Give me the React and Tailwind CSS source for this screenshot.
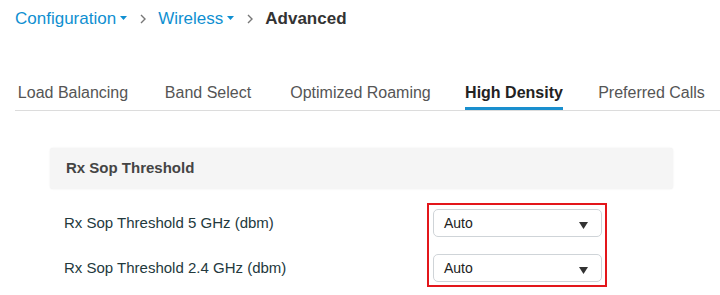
import React from 'react';

const tabs = [
  { label: 'Load Balancing', ml: 'ml-[3px]', w: 'w-[110px]' },
  { label: 'Band Select', ml: 'ml-[37px]', w: 'w-[86px]' },
  { label: 'Optimized Roaming', ml: 'ml-[35px]', w: 'w-[149px]' },
  { label: 'High Density', ml: 'ml-[30px]', w: 'w-[98px]', active: true },
  { label: 'Preferred Calls', ml: 'ml-[35px]', w: 'w-[107px]' },
];

const Caret = () => (
  <svg width="7" height="4" viewBox="0 0 7 4" className="ml-[4px] mb-[3px]">
    <path d="M0 0 L7 0 L3.5 4 Z" fill="#0f8fd1" />
  </svg>
);

const Chevron = () => (
  <svg width="6" height="10" viewBox="0 0 6 10" className="ml-[13px] mr-[12px]">
    <path d="M1 1 L5 5 L1 9" fill="none" stroke="#777" strokeWidth="1.4" />
  </svg>
);

const SelectBox = ({ value }) => (
  <div className="flex h-[28px] w-[169px] items-center justify-between rounded-[5px] border border-[#cfd4d8] bg-white pl-[10px] pr-[13px]">
    <span className="text-[14px] text-[#222]">{value}</span>
    <svg width="9" height="7" viewBox="0 0 9 7" className="mt-[4px]">
      <path d="M0 0 L9 0 L4.5 7 Z" fill="#333" />
    </svg>
  </div>
);

const App = () => {
  return (
    <div className="h-[295px] w-[720px] overflow-hidden bg-white font-['Liberation_Sans',Arial,sans-serif]">
      {/* breadcrumb */}
      <div className="flex h-[20px] items-center pl-[15px] pt-0 mt-[9px] text-[17px] leading-[20px]">
        <span className="text-[#0f8fd1]">Configuration</span>
        <Caret />
        <Chevron />
        <span className="text-[#0f8fd1]">Wireless</span>
        <Caret />
        <Chevron />
        <span className="font-bold text-[#333]">Advanced</span>
      </div>

      {/* tabs */}
      <div className="ml-[15px] mt-[54px] flex border-b border-[#dcdcdc]">
        {tabs.map((t) => (
          <div
            key={t.label}
            className={`${t.ml} ${t.w} flex justify-center whitespace-nowrap border-b-[3px] pb-[4px] text-[16px] leading-[20px] ${
              t.active ? 'border-[#1a8fce] font-bold text-[15px] text-[#222]' : 'border-transparent text-[#555]'
            }`}
          >
            {t.label}
          </div>
        ))}
      </div>

      {/* panel */}
      <div className="ml-[50px] mt-[37px] flex h-[41px] w-[623px] items-center rounded-[3px] bg-[#f5f5f5] pl-[16px] shadow-[0_0_2px_rgba(0,0,0,0.08)]">
        <span className="text-[15px] font-bold text-[#444]">Rx Sop Threshold</span>
      </div>

      {/* rows */}
      <div className="mt-[14px] flex">
        <div className="ml-[64px] mt-[6px] flex w-[363px] flex-col gap-[17px]">
          <div className="flex h-[28px] items-center text-[15px] text-[#23393d]">Rx Sop Threshold 5 GHz (dbm)</div>
          <div className="flex h-[28px] items-center text-[15px] text-[#23393d]">Rx Sop Threshold 2.4 GHz (dbm)</div>
        </div>
        <div className="flex w-[180px] flex-col gap-[17px] border-2 border-[#e3161b] pb-[3px] pl-[4px] pt-[4px]">
          <SelectBox value="Auto" />
          <SelectBox value="Auto" />
        </div>
      </div>
    </div>
  );
};

export default App;
